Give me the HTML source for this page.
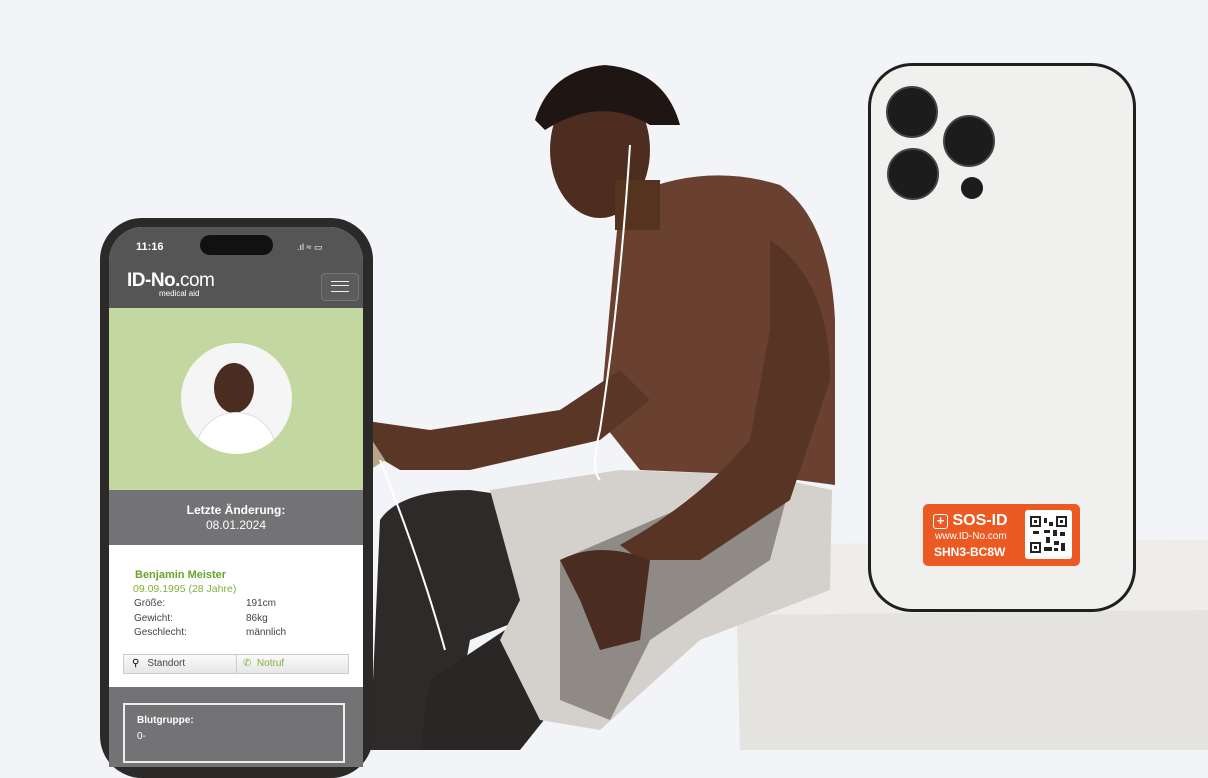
<!DOCTYPE html>
<html><head><meta charset="utf-8"><style>
body{margin:0;width:1208px;height:750px;overflow:hidden;background:#f3f4f8;font-family:"Liberation Sans",sans-serif;position:relative}
.a{position:absolute}
</style></head><body>
<svg class="a" style="left:0;top:0" width="1208" height="750">
<polygon points="735,545 1208,540 1208,750 740,750" fill="#e4e3df"/>
<polygon points="735,545 1208,540 1208,610 740,615" fill="#eeedea"/>
<path d="M380,520 Q400,490 470,490 L540,500 L520,620 L470,640 L450,750 L370,750 Z" fill="#2e2a29"/>
<path d="M430,680 L520,620 L560,700 L520,750 L420,750 Z" fill="#2a2625"/>
<path d="M490,490 L620,470 L760,475 L832,490 L830,590 L700,640 L600,730 L540,720 L500,640 L520,600 Z" fill="#d4d1cd"/>
<path d="M560,560 L700,500 L790,485 L770,560 L650,640 L610,720 L560,700 Z" fill="#8f8a86"/>
<path d="M620,200 Q700,160 780,185 Q830,220 835,320 L835,485 L760,475 L640,470 L600,420 Q610,300 620,200 Z" fill="#6a4130"/>
<path d="M770,240 Q830,280 830,380 L790,500 L700,560 L640,560 L620,545 Q700,500 750,440 L770,330 Z" fill="#573424"/>
<path d="M650,400 L600,440 L470,470 L400,470 L350,440 L360,420 L430,430 L560,410 L620,370 Z" fill="#5a3626"/>
<ellipse cx="600" cy="150" rx="50" ry="68" fill="#4c2d20"/>
<path d="M535,120 Q550,70 605,65 Q665,70 680,125 L650,125 Q600,95 545,130 Z" fill="#1f1512"/>
<rect x="615" y="180" width="45" height="50" fill="#55331f"/>
<polygon points="318,384 330,376 385,460 373,468" fill="#b9a48a"/>
<path d="M560,560 Q600,540 650,560 L640,640 L600,650 L580,600 Z" fill="#4a2c20"/>
<path d="M630,145 Q620,300 600,430 Q590,470 600,480 M380,460 Q420,560 445,650" stroke="#fff" stroke-width="2" fill="none"/>
</svg>

<div class="a" style="left:868px;top:63px;width:262px;height:543px;border:3px solid #1f1f1f;border-radius:44px;background:#f0f0ef"></div>
<svg class="a" style="left:860px;top:60px" width="160" height="160">
<circle cx="52" cy="52" r="25" fill="#1c1c1c" stroke="#444" stroke-width="2"/>
<circle cx="109" cy="81" r="25" fill="#1c1c1c" stroke="#444" stroke-width="2"/>
<circle cx="53" cy="114" r="25" fill="#1c1c1c" stroke="#444" stroke-width="2"/>
<circle cx="112" cy="128" r="11" fill="#1c1c1c"/>
</svg>
<div class="a" style="left:923px;top:504px;width:157px;height:62px;background:#ec5a24;border-radius:5px;color:#fff;font-weight:bold">
<div class="a" style="left:10px;top:9px;font-size:16px;line-height:16px"><span style="display:inline-block;width:13px;height:13px;border:1px solid #fff;border-radius:3px;font-size:13px;line-height:12px;text-align:center">+</span> SOS-ID</div>
<div class="a" style="left:12px;top:27px;font-size:10px;font-weight:normal">www.ID-No.com</div>
<div class="a" style="left:11px;top:41px;font-size:12px">SHN3-BC8W</div>
<div class="a" style="left:102px;top:6px;width:47px;height:49px;background:#fff;border-radius:3px">
<svg style="position:absolute;left:5px;top:6px" width="37" height="37"><rect width="37" height="37" fill="#fff"/>
<g fill="#222"><rect x="0" y="0" width="11" height="11"/><rect x="26" y="0" width="11" height="11"/><rect x="0" y="26" width="11" height="11"/>
<rect x="14" y="2" width="3" height="5"/><rect x="19" y="6" width="4" height="4"/><rect x="14" y="14" width="6" height="3"/><rect x="23" y="14" width="4" height="6"/><rect x="30" y="16" width="5" height="4"/><rect x="3" y="15" width="6" height="3"/><rect x="16" y="21" width="4" height="6"/><rect x="24" y="25" width="5" height="4"/><rect x="31" y="27" width="4" height="8"/><rect x="14" y="31" width="8" height="4"/><rect x="24" y="32" width="4" height="3"/></g>
<g fill="#fff"><rect x="2" y="2" width="7" height="7"/><rect x="28" y="2" width="7" height="7"/><rect x="2" y="28" width="7" height="7"/></g>
<g fill="#222"><rect x="4" y="4" width="3" height="3"/><rect x="30" y="4" width="3" height="3"/><rect x="4" y="30" width="3" height="3"/></g></svg></div>
</div>

<div class="a" style="left:100px;top:218px;width:273px;height:560px;background:#2c2a28;border-radius:42px"></div>
<div class="a" style="left:109px;top:227px;width:254px;height:540px;background:#fff;border-radius:34px 34px 0 0;overflow:hidden">
<div class="a" style="left:0;top:0;width:254px;height:81px;background:#555555"></div>
<div class="a" style="left:27px;top:14px;color:#fff;font-size:11px;font-weight:bold">11:16</div>
<div class="a" style="left:91px;top:8px;width:73px;height:20px;background:#111;border-radius:10px"></div>
<div class="a" style="left:188px;top:15px;color:#fff;font-size:9px">.ıl ≈ ▭</div>
<div class="a" style="left:18px;top:43px;color:#fff;font-size:19px;font-weight:bold;letter-spacing:-.5px">ID-No.<span style="font-weight:normal">com</span></div>
<div class="a" style="left:50px;top:62px;color:#fff;font-size:8px">medical aid</div>
<div class="a" style="left:212px;top:46px;width:36px;height:26px;border:1px solid #777;border-radius:4px;background:#5c5c5c"><div style="margin:7px 9px;height:9px;border-top:1.5px solid #eee;border-bottom:1.5px solid #eee;position:relative"><div style="position:absolute;top:3px;width:100%;border-top:1.5px solid #eee"></div></div></div>
<div class="a" style="left:0;top:81px;width:254px;height:182px;background:#c3d8a0"></div>
<div class="a" style="left:72px;top:116px;width:111px;height:111px;border-radius:50%;background:#f5f5f5;overflow:hidden"><div style="position:absolute;left:33px;top:20px;width:40px;height:50px;border-radius:50%;background:#4a2c20"></div><div style="position:absolute;left:15px;top:70px;width:80px;height:50px;border-radius:40px 40px 0 0;background:#fff;box-shadow:0 0 0 1px #ddd"></div></div>
<div class="a" style="left:0;top:263px;width:254px;height:55px;background:#737275;color:#fff;text-align:center;font-size:12px;line-height:15px;padding-top:13px;box-sizing:border-box"><b>Letzte Änderung:</b><br>08.01.2024</div>
<div class="a" style="left:26px;top:342px;color:#6aa32a;font-size:11px;font-weight:bold">Benjamin Meister</div>
<div class="a" style="left:24px;top:356px;color:#7fb13a;font-size:10.5px">09.09.1995 (28 Jahre)</div>
<div class="a" style="left:25px;top:370px;color:#444;font-size:10px;line-height:14.5px">Größe:<br>Gewicht:<br>Geschlecht:</div>
<div class="a" style="left:137px;top:370px;color:#444;font-size:10px;line-height:14.5px">191cm<br>86kg<br>männlich</div>
<div class="a" style="left:14px;top:427px;width:224px;height:18px;border:1px solid #ccc;background:linear-gradient(#fafafa,#e6e6e6);font-size:10px;line-height:18px"><span style="margin-left:8px">⚲</span><span style="margin-left:8px;color:#444">Standort</span><span style="position:absolute;left:112px;top:0;height:18px;border-left:1px solid #ccc;padding-left:6px;color:#7fb13a">✆ &nbsp;Notruf</span></div>
<div class="a" style="left:0;top:460px;width:254px;height:90px;background:#737275"></div>
<div class="a" style="left:14px;top:476px;width:222px;height:60px;border:2px solid #eee;color:#fff;font-size:10px;line-height:16px;padding:8px 12px;box-sizing:border-box"><b>Blutgruppe:</b><br>0-</div>
</div>
</body></html>
